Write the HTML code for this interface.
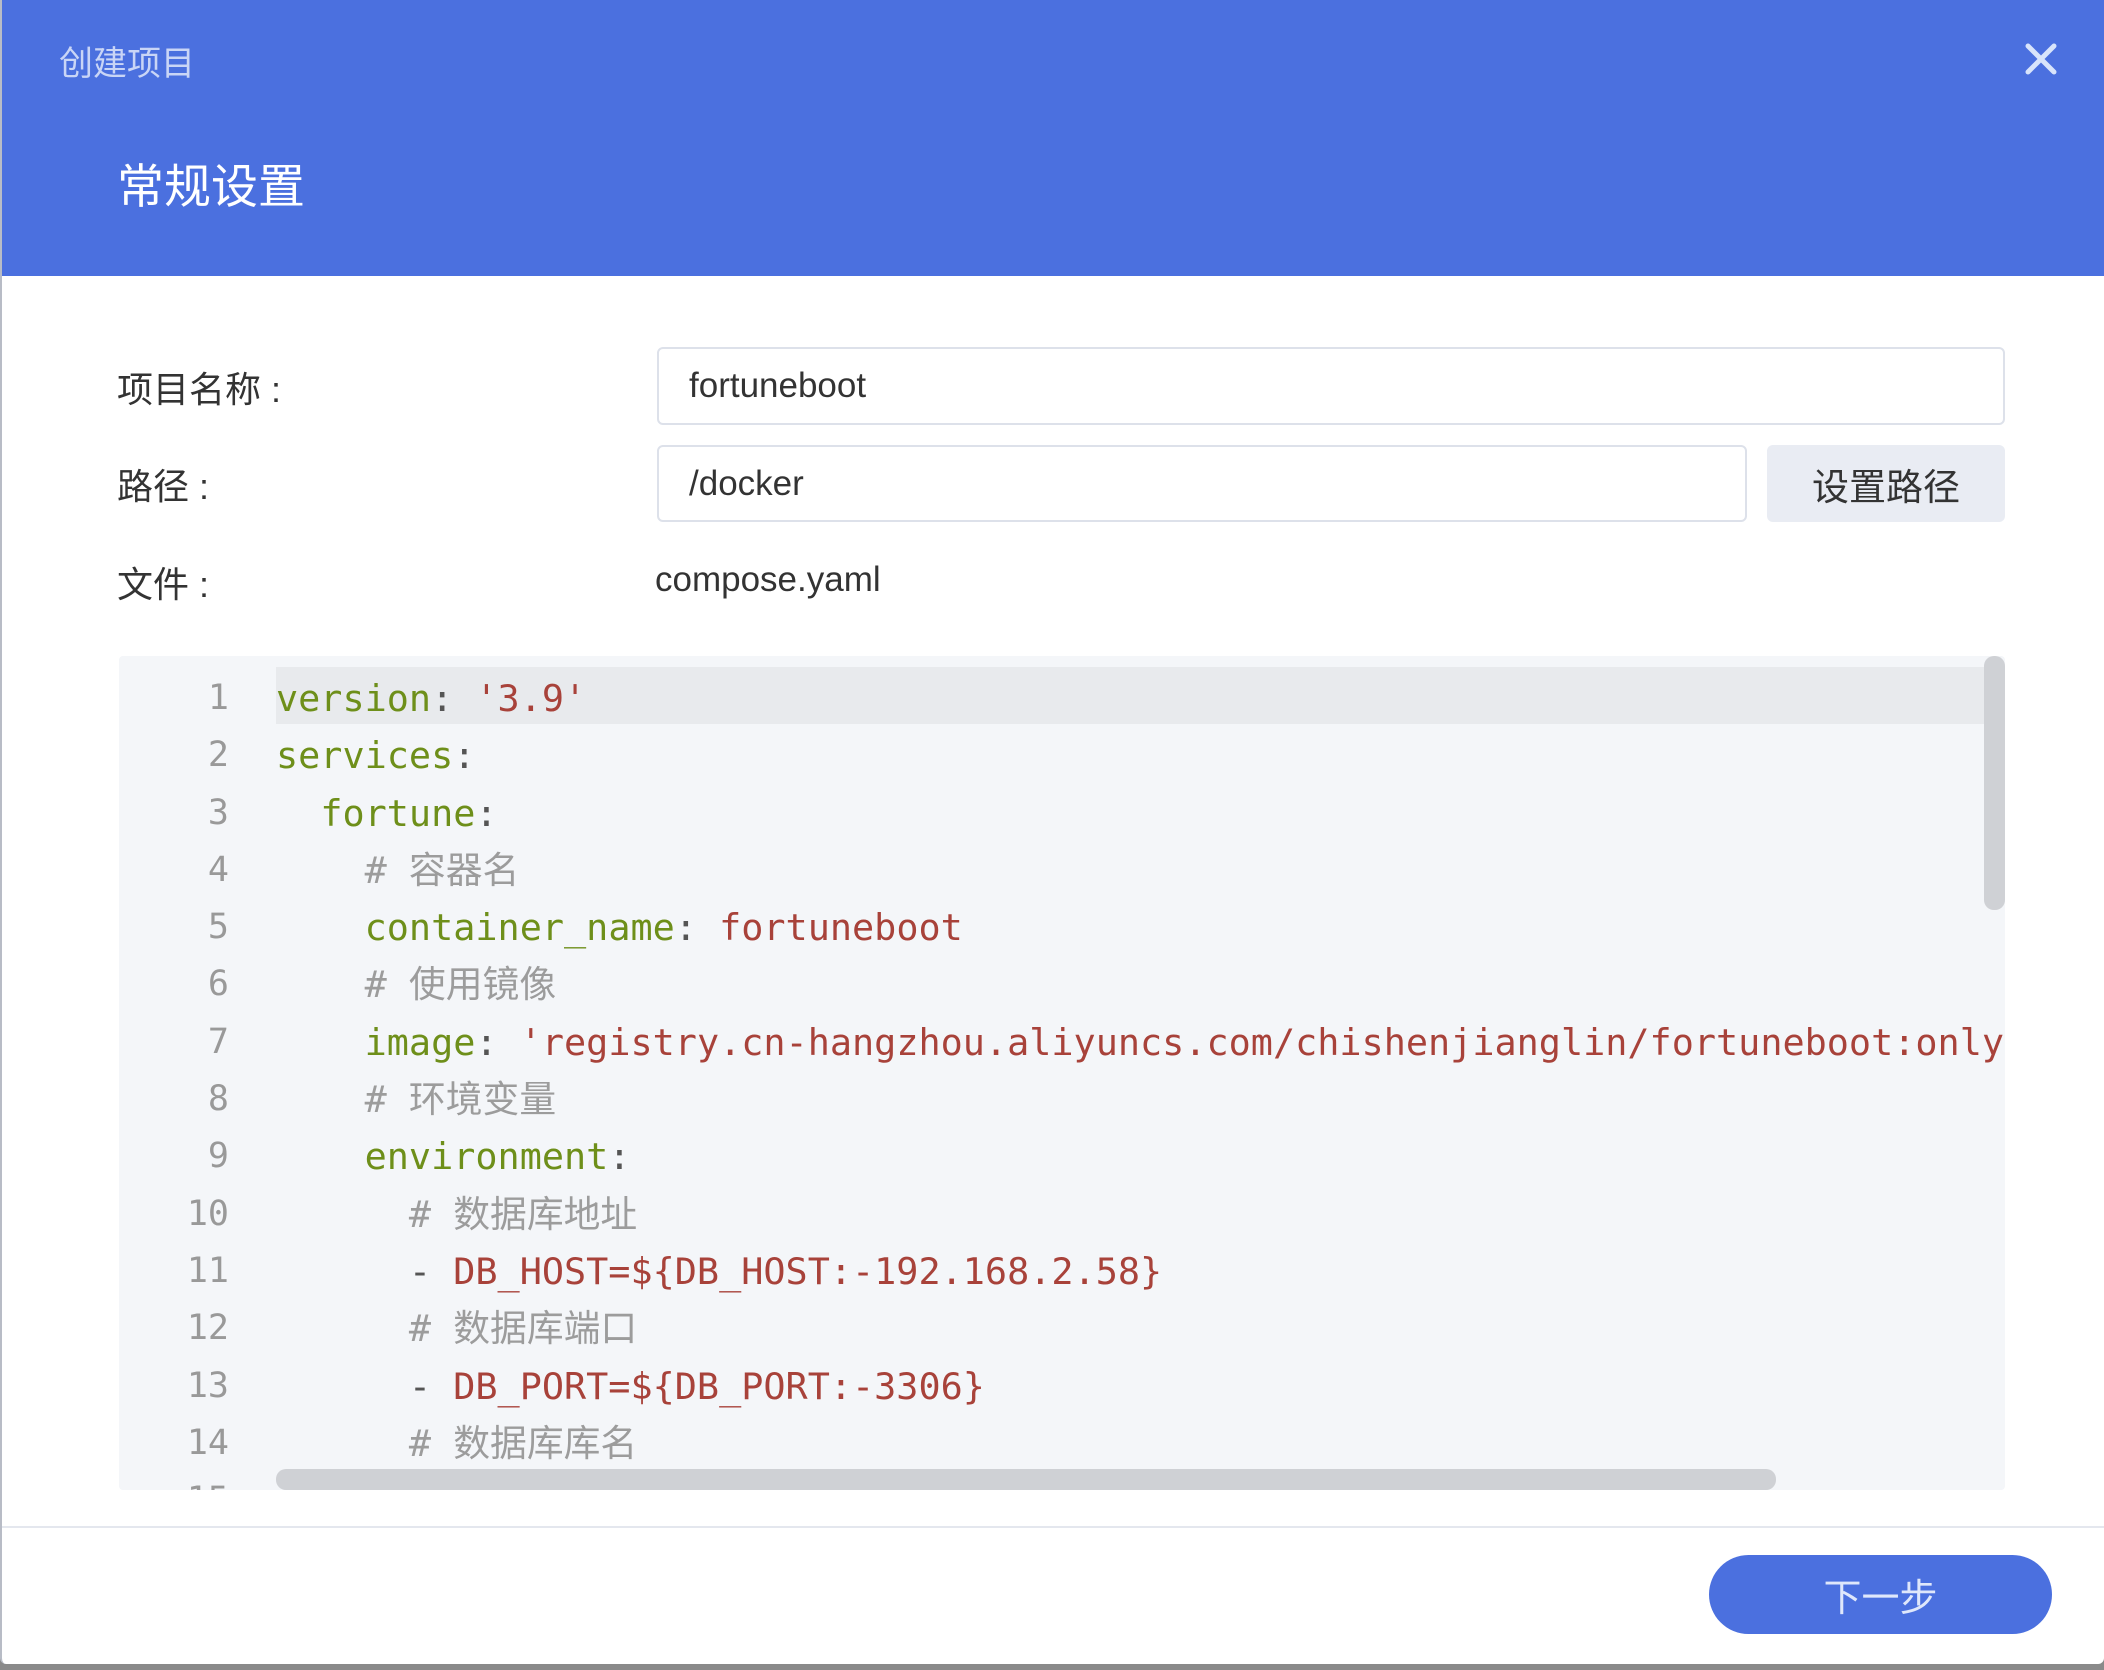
<!DOCTYPE html>
<html><head><meta charset="utf-8"><style>
*{margin:0;padding:0;box-sizing:border-box}
body{width:2104px;height:1670px;background:#8a8a8a;position:relative;overflow:hidden;font-family:"Liberation Sans","Noto Sans CJK SC",sans-serif}
.dlg{position:absolute;left:0;top:0;width:2104px;height:1664px;background:#fff;border-left:2px solid #b8bcc6;border-radius:0 0 6px 6px;overflow:hidden}
.hdr{position:absolute;left:0;top:0;width:2104px;height:276px;background:#4b70df}
.t1{position:absolute;left:57px;top:36px;font-size:34px;color:#c9d5f6}
.t2{position:absolute;left:115px;top:148px;font-size:47px;color:#fff}
.x{position:absolute;left:2022px;top:42px;width:34px;height:34px}
.lbl{position:absolute;left:115px;font-size:36px;color:#333}
.inp{position:absolute;left:655px;border:2px solid #dde1ea;border-radius:6px;background:#fff;font-size:35px;color:#333;padding-left:30px;display:flex;align-items:center}
.btn{position:absolute;left:1765px;top:445px;width:238px;height:77px;background:#e9ecf3;border-radius:6px;font-size:37px;color:#333;display:flex;align-items:center;justify-content:center}
.code{position:absolute;left:117px;top:656px;width:1886px;height:834px;background:#f4f6f9;overflow:hidden;border-radius:4px}
.hl{position:absolute;left:157px;top:11px;width:1710px;height:57px;background:#e8eaed}
.ln{position:absolute;left:0;top:14px;width:110px;text-align:right;font-family:"DejaVu Sans Mono",monospace;font-size:35px;line-height:57.3px;color:#999}
.src{position:absolute;left:157px;top:14px;font-family:"DejaVu Sans Mono","Noto Sans CJK SC",monospace;font-size:36.8px;line-height:57.3px;white-space:pre;color:#555}
.k{color:#6e8f1a}.s{color:#a8423a}.c{color:#9c9c9c}
.vs{position:absolute;left:1865px;top:0;width:21px;height:254px;background:#cfd1d5;border-radius:10px}
.hs{position:absolute;left:157px;top:813px;width:1500px;height:21px;background:#cfd1d5;border-radius:10px}
.div{position:absolute;left:0;top:1526px;width:2104px;height:2px;background:#e4e7ee}
.next{position:absolute;left:1707px;top:1555px;width:343px;height:79px;background:#4b70df;border-radius:40px;color:#dfe7fb;font-size:38px;display:flex;align-items:center;justify-content:center}
</style></head><body>
<div class="dlg">
<div class="hdr">
<div class="t1">创建项目</div>
<div class="t2">常规设置</div>
<svg class="x" viewBox="0 0 34 34"><path d="M4 4L30 30M30 4L4 30" stroke="#d8e4fb" stroke-width="5" stroke-linecap="round"/></svg>
</div>
<div class="lbl" style="top:361px">项目名称 :</div>
<div class="inp" style="top:347px;width:1348px;height:78px">fortuneboot</div>
<div class="lbl" style="top:458px">路径 :</div>
<div class="inp" style="top:445px;width:1090px;height:77px">/docker</div>
<div class="btn">设置路径</div>
<div class="lbl" style="top:556px">文件 :</div>
<div style="position:absolute;left:653px;top:560px;font-size:35px;color:#333">compose.yaml</div>
<div class="code">
<div class="hl"></div>
<div class="ln">1<br>2<br>3<br>4<br>5<br>6<br>7<br>8<br>9<br>10<br>11<br>12<br>13<br>14<br>15</div>
<div class="src"><span class="k">version</span>: <span class="s">'3.9'</span>
<span class="k">services</span>:
  <span class="k">fortune</span>:
    <span class="c"># 容器名</span>
    <span class="k">container_name</span>: <span class="s">fortuneboot</span>
    <span class="c"># 使用镜像</span>
    <span class="k">image</span>: <span class="s">'registry.cn-hangzhou.aliyuncs.com/chishenjianglin/fortuneboot:only'</span>
    <span class="c"># 环境变量</span>
    <span class="k">environment</span>:
      <span class="c"># 数据库地址</span>
      - <span class="s">DB_HOST=${DB_HOST:-192.168.2.58}</span>
      <span class="c"># 数据库端口</span>
      - <span class="s">DB_PORT=${DB_PORT:-3306}</span>
      <span class="c"># 数据库库名</span>
      - <span class="s">DB_NAME=${DB_NAME:-fortuneboot}</span></div>
<div class="vs"></div>
<div class="hs"></div>
</div>
<div class="div"></div>
<div class="next">下一步</div>
</div>
</body></html>
